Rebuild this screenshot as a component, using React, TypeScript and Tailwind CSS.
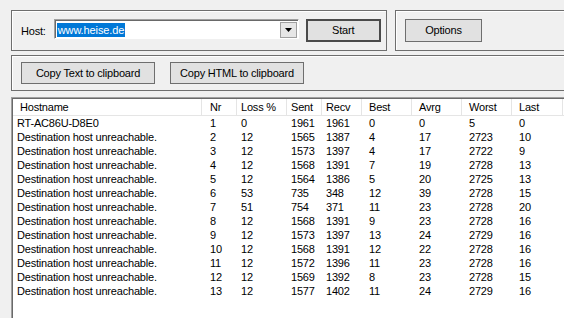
import React from "react";

const COLUMNS = [
  { label: "Hostname", width: 189, pad: "pl-[7px]", cellPad: "pl-[4px]" },
  { label: "Nr", width: 35, pad: "pl-[8px]", cellPad: "pl-[8px]" },
  { label: "Loss %", width: 50, pad: "pl-[4px]", cellPad: "pl-[4px]" },
  { label: "Sent", width: 35, pad: "pl-[4px]", cellPad: "pl-[4px]" },
  { label: "Recv", width: 40, pad: "pl-[4px]", cellPad: "pl-[4px]" },
  { label: "Best", width: 50, pad: "pl-[7px]", cellPad: "pl-[7px]" },
  { label: "Avrg", width: 50, pad: "pl-[7px]", cellPad: "pl-[7px]" },
  { label: "Worst", width: 50, pad: "pl-[7px]", cellPad: "pl-[7px]" },
  { label: "Last", width: 51, pad: "pl-[7px]", cellPad: "pl-[7px]" },
];

const DEST = "Destination host unreachable.";

const ROWS: (string | number)[][] = [
  ["RT-AC86U-D8E0", 1, 0, 1961, 1961, 0, 0, 5, 0],
  [DEST, 2, 12, 1565, 1387, 4, 17, 2723, 10],
  [DEST, 3, 12, 1573, 1397, 4, 17, 2722, 9],
  [DEST, 4, 12, 1568, 1391, 7, 19, 2728, 13],
  [DEST, 5, 12, 1564, 1386, 5, 20, 2725, 13],
  [DEST, 6, 53, 735, 348, 12, 39, 2728, 15],
  [DEST, 7, 51, 754, 371, 11, 23, 2728, 20],
  [DEST, 8, 12, 1568, 1391, 9, 23, 2728, 16],
  [DEST, 9, 12, 1573, 1397, 13, 24, 2729, 16],
  [DEST, 10, 12, 1568, 1391, 12, 22, 2728, 16],
  [DEST, 11, 12, 1572, 1396, 11, 23, 2728, 16],
  [DEST, 12, 12, 1569, 1392, 8, 23, 2728, 15],
  [DEST, 13, 12, 1577, 1402, 11, 24, 2729, 16],
];

function GroupBox({ className = "", children }: { className?: string; children?: React.ReactNode }) {
  return (
    <div className={`border border-[#6e6e6e] shadow-[inset_1px_1px_0_#ffffff] ${className}`}>{children}</div>
  );
}

function Button({ label, className = "", isDefault = false }: { label: string; className?: string; isDefault?: boolean }) {
  return (
    <button
      type="button"
      className={`flex items-center justify-center bg-[#e1e1e1] text-[11px] tracking-[-0.2px] text-black ${
        isDefault ? "border-2 border-[#4a4a4a]" : "border border-[#6e6e6e]"
      } ${className}`}
    >
      {label}
    </button>
  );
}

export default function App() {
  return (
    <div
      className="relative h-[318px] w-[564px] overflow-hidden bg-[#f0f0f0] pl-[11px] pt-[10px] text-black"
      style={{ fontFamily: '"Liberation Sans", Arial, sans-serif' }}
    >
      <div className="flex gap-[8px]">
        <GroupBox className="flex h-[41px] w-[376px] shrink-0 items-start pt-[8px]">
          <span className="mt-[4px] pl-[9px] text-[11px] tracking-[-0.2px]">Host:</span>
          <div className="ml-[8px] flex h-[20px] w-[245px] border-t border-l border-[#a0a0a0] border-b-white border-r-white border-b border-r">
            <div className="flex flex-1 items-center border-t border-l border-[#696969] bg-white pl-[1px]">
              <span className="bg-[#0078d7] px-[1px] text-[11px] leading-[14px] tracking-[-0.1px] text-white">
                www.heise.de
              </span>
              <div className="ml-auto mr-[1px] flex h-[16px] w-[17px] items-center justify-center border border-[#a0a0a0] bg-[#e6e6e6]">
                <svg width="7" height="4" viewBox="0 0 7 4">
                  <path d="M0 0H7L3.5 4Z" fill="#000" />
                </svg>
              </div>
            </div>
          </div>
          <Button label="Start" isDefault className="ml-[7px] h-[23px] w-[75px]" />
        </GroupBox>
        <GroupBox className="flex h-[41px] w-[190px] shrink-0 items-start pt-[8px]">
          <Button label="Options" className="ml-[9px] h-[23px] w-[77px]" />
        </GroupBox>
      </div>

      <GroupBox className="mt-[4px] flex h-[36px] w-[570px] items-start gap-[15px] pl-[9px] pt-[6px]">
        <Button label="Copy Text to clipboard" className="h-[22px] w-[134px]" />
        <Button label="Copy HTML to clipboard" className="h-[22px] w-[134px]" />
      </GroupBox>

      <div className="mt-[6px] h-[240px] w-[570px] border-t border-l border-[#a0a0a0]">
        <div className="h-full border-t border-l border-[#696969] bg-white text-[11px] tracking-[-0.2px]">
          <div className="flex h-[17px] border-b border-[#e5e5e5] bg-white">
            {COLUMNS.map((c) => (
              <div
                key={c.label}
                style={{ width: c.width }}
                className={`flex shrink-0 items-center border-r border-[#e5e5e5] ${c.pad}`}
              >
                {c.label}
              </div>
            ))}
          </div>
          {ROWS.map((row, i) => (
            <div key={i} className="flex h-[14px] items-center leading-[14px]">
              {row.map((v, j) => (
                <div key={j} style={{ width: COLUMNS[j].width }} className={`shrink-0 whitespace-nowrap ${COLUMNS[j].cellPad}`}>
                  {v}
                </div>
              ))}
            </div>
          ))}
        </div>
      </div>
    </div>
  );
}
